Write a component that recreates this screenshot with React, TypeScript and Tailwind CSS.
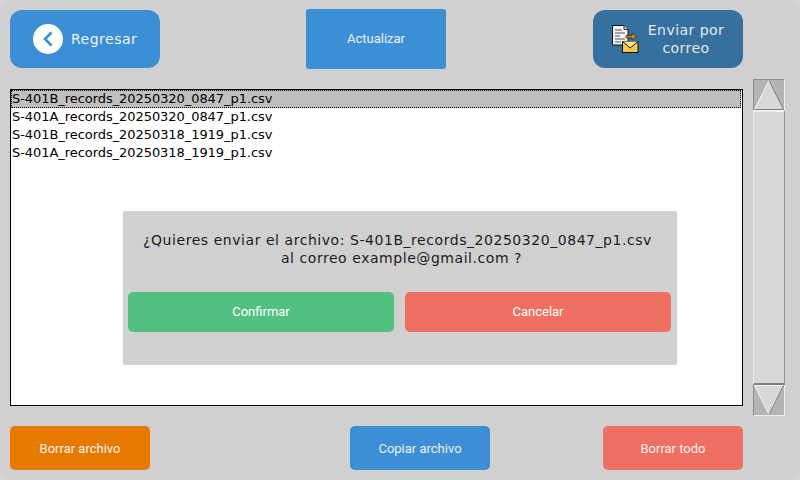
import React from "react";

const files = [
  "S-401B_records_20250320_0847_p1.csv",
  "S-401A_records_20250320_0847_p1.csv",
  "S-401B_records_20250318_1919_p1.csv",
  "S-401A_records_20250318_1919_p1.csv",
];

function MailIcon() {
  return (
    <svg width="30" height="30" viewBox="0 0 30 30">
      <path d="M2.500 1.500H14l4 4V21H2.500Z" fill="#f4f4f4" stroke="#111" strokeWidth="1" />
      <path d="M14 1.500V5.500H18" fill="#ccc" stroke="#111" strokeWidth="0.8" />
      <path d="M5 6H12M5 9H15M5 12H10M5 15H15M5 18H11" stroke="#555" strokeWidth="1.200" />
      <path d="M16 11.500H22V9L26.500 12.500L22 16V13.800H16Z" fill="#e8821a" stroke="#222" strokeWidth="0.7" />
      <rect x="12.500" y="17.500" width="15.500" height="11" fill="#f6c945" stroke="#111" strokeWidth="1" />
      <path d="M12.500 17.500L20.200 24L28 17.500" fill="#fbe38a" stroke="#111" strokeWidth="1" />
    </svg>
  );
}

function UpArrow() {
  return (
    <div className="h-[31px] w-[32px] bg-[#b4b4b4] border-t border-l border-[#8c8c8c] border-r border-r-[#eeeeee]">
      <svg width="30" height="30" viewBox="0 0 30 30" className="block">
        <path d="M15 0.500L0.500 29.500H29.500Z" fill="#d8d8d8" />
        <path d="M15 0.500L0.500 29.500" stroke="#f4f4f4" strokeWidth="1" fill="none" />
        <path d="M15 0.500L29.500 29.500M0.500 29.500H29.500" stroke="#808080" strokeWidth="1" fill="none" />
      </svg>
    </div>
  );
}

function DownArrow() {
  return (
    <div className="h-[31px] w-[32px] bg-[#b4b4b4] border-l border-[#8c8c8c] border-r border-r-[#eeeeee] border-b border-b-[#eeeeee]">
      <svg width="30" height="30" viewBox="0 0 30 30" className="block">
        <path d="M0.500 0.500H29.500L15 29.500Z" fill="#d8d8d8" />
        <path d="M0.500 0.500H29.500M0.500 0.500L15 29.500" stroke="#f4f4f4" strokeWidth="1" fill="none" />
        <path d="M29.500 0.500L15 29.500" stroke="#808080" strokeWidth="1" fill="none" />
      </svg>
    </div>
  );
}

export default function App() {
  return (
    <div className="w-[800px] h-[480px] overflow-hidden bg-[#d6d6d6]">
      <div className="relative w-[800px] h-[480px] rounded-[12px] overflow-hidden bg-[#d0d0d0] font-['Roboto',sans-serif]">
        <div className="flex items-center ml-[10px] pt-[9px] h-[69px]">
          <button className="w-[150px] h-[58px] rounded-[12px] bg-[#3b8fd4] flex items-center pl-[23px] gap-[8px] font-['DejaVu_Sans',sans-serif] text-[14px] tracking-[0.5px]">
            <span className="w-[30px] h-[30px] rounded-full bg-white flex items-center justify-center">
              <svg width="14" height="16" viewBox="0 0 14 16">
                <path d="M10.500 1.500L4 8L10.500 14.500" fill="none" stroke="#3b8fd4" strokeWidth="2.600" />
              </svg>
            </span>
            <span className="text-[#f2f2f2]">Regresar</span>
          </button>
          <button className="ml-[146px] w-[140px] h-[60px] rounded-[3px] bg-[#3b8fd4] text-[#f0f0f0] text-[13px]">
            Actualizar
          </button>
          <button className="ml-[147px] w-[150px] h-[58px] rounded-[12px] bg-[#36709f] flex items-center pl-[17px] text-[#e8e8e8] font-['DejaVu_Sans',sans-serif] text-[14px] tracking-[0.45px] leading-[18px]">
            <MailIcon />
            <span className="w-[92px] text-center">
              Enviar por
              <br />
              correo
            </span>
          </button>
        </div>

        <div className="flex ml-[10px] mt-[10px] w-[775px] h-[337px] gap-[10px]">
          <div className="w-[733px] mt-[10px] h-[317px] border border-black bg-white pr-[1px]">
            <div className="font-['DejaVu_Sans',sans-serif] text-[13px] leading-[18px] tracking-[-0.06px] text-black">
              {files.map((f, i) => (
                <div
                  key={f}
                  className={
                    i === 0
                      ? "h-[18px] pl-px bg-[#c0c0c0] outline-1 outline-dotted outline-black -outline-offset-1 whitespace-nowrap"
                      : "h-[18px] pl-px whitespace-nowrap"
                  }
                >
                  {f}
                </div>
              ))}
            </div>
          </div>
          <div className="w-[32px] h-[337px] flex flex-col">
            <UpArrow />
            <div className="flex-1 bg-[#d8d8d8] border-t-2 border-t-[#f0f0f0] border-b-2 border-b-[#808080] border-l border-l-[#e8e8e8] border-r border-r-[#909090]" />
            <DownArrow />
          </div>
        </div>

        <div className="flex items-center ml-[10px] mt-[10px]">
          <button className="w-[140px] h-[44px] pt-[2px] rounded-[5px] bg-[#e67a00] text-[#f0f0f0] text-[13px]">Borrar archivo</button>
          <button className="ml-[200px] w-[140px] h-[44px] pt-[2px] rounded-[5px] bg-[#3b8fd4] text-[#f0f0f0] text-[13px]">Copiar archivo</button>
          <button className="ml-[113px] w-[140px] h-[44px] pt-[2px] rounded-[5px] bg-[#ee7062] text-[#f0f0f0] text-[13px]">Borrar todo</button>
        </div>

        <div className="absolute left-[123px] top-[211px] w-[554px] h-[154px] bg-[#d0d0d0] rounded-[1px] pl-[5px] pr-[6px]">
          <p className="mt-[20px] h-[36px] text-center text-[14px] tracking-[0.55px] leading-[18px] text-[#1c1c1c] font-['DejaVu_Sans',sans-serif] whitespace-nowrap -translate-x-[2px]">
            ¿Quieres enviar el archivo: S-401B_records_20250320_0847_p1.csv
            <br />
            <span className="pl-[8px]">al correo example@gmail.com ?</span>
          </p>
          <div className="flex gap-[11px] mt-[25px]">
            <button className="w-[266px] h-[40px] rounded-[5px] bg-[#52c080] text-white text-[13px]">Confirmar</button>
            <button className="w-[266px] h-[40px] rounded-[5px] bg-[#ee7062] text-white text-[13px]">Cancelar</button>
          </div>
        </div>
      </div>
    </div>
  );
}
